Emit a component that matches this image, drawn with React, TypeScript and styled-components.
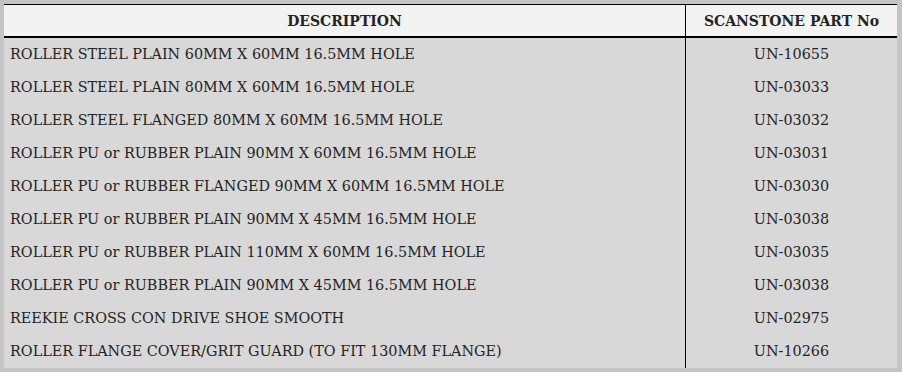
import React from "react";
import styled, { createGlobalStyle } from "styled-components";

interface Part {
  description: string;
  partNo: string;
}

const parts: Part[] = [
  { description: "ROLLER STEEL PLAIN 60MM X 60MM 16.5MM HOLE", partNo: "UN-10655" },
  { description: "ROLLER STEEL PLAIN 80MM X 60MM 16.5MM HOLE", partNo: "UN-03033" },
  { description: "ROLLER STEEL FLANGED 80MM X 60MM 16.5MM HOLE", partNo: "UN-03032" },
  { description: "ROLLER PU or RUBBER PLAIN 90MM X 60MM 16.5MM HOLE", partNo: "UN-03031" },
  { description: "ROLLER PU or RUBBER FLANGED 90MM X 60MM 16.5MM HOLE", partNo: "UN-03030" },
  { description: "ROLLER PU or RUBBER PLAIN 90MM X 45MM 16.5MM HOLE", partNo: "UN-03038" },
  { description: "ROLLER PU or RUBBER PLAIN 110MM X 60MM 16.5MM HOLE", partNo: "UN-03035" },
  { description: "ROLLER PU or RUBBER PLAIN 90MM X 45MM 16.5MM HOLE", partNo: "UN-03038" },
  { description: "REEKIE CROSS CON DRIVE SHOE SMOOTH", partNo: "UN-02975" },
  { description: "ROLLER FLANGE COVER/GRIT GUARD (TO FIT 130MM FLANGE)", partNo: "UN-10266" },
];

export default function App() {
  return (
    <>
      <GlobalStyle />
      <Page>
        <PartsTable>
          <thead>
            <tr>
              <HeadCell>DESCRIPTION</HeadCell>
              <HeadCell $narrow>SCANSTONE PART No</HeadCell>
            </tr>
          </thead>
          <tbody>
            {parts.map((part, i) => (
              <tr key={i}>
                <DescCell>{part.description}</DescCell>
                <PartCell>{part.partNo}</PartCell>
              </tr>
            ))}
          </tbody>
        </PartsTable>
      </Page>
    </>
  );
}

const GlobalStyle = createGlobalStyle`
  body {
    margin: 0;
    background: #c4c4c4;
    font-family: "DejaVu Serif", "Liberation Serif", serif;
  }
`;

const Page = styled.div`
  padding: 4px 5px 5px 4px;
`;

const PartsTable = styled.table`
  width: 893px;
  border-collapse: collapse;
  background: #d8d8d8;
  color: #242424;
  font-size: 14.4px;
`;

const HeadCell = styled.th<{ $narrow?: boolean }>`
  height: 31px;
  padding: 0;
  background: #f3f3f3;
  border-top: 1px solid #000;
  border-bottom: 2px solid #000;
  font-weight: bold;
  font-size: 14px;
  text-align: center;
  width: ${(p) => (p.$narrow ? "211px" : "auto")};
  & + & {
    border-left: 1px solid #000;
  }
`;

const DescCell = styled.td`
  height: 31px;
  padding: 0 0 2px 6px;
  text-align: left;
  white-space: nowrap;
`;

const PartCell = styled.td`
  height: 31px;
  padding: 0 0 2px 0;
  text-align: center;
  border-left: 1px solid #000;
`;
